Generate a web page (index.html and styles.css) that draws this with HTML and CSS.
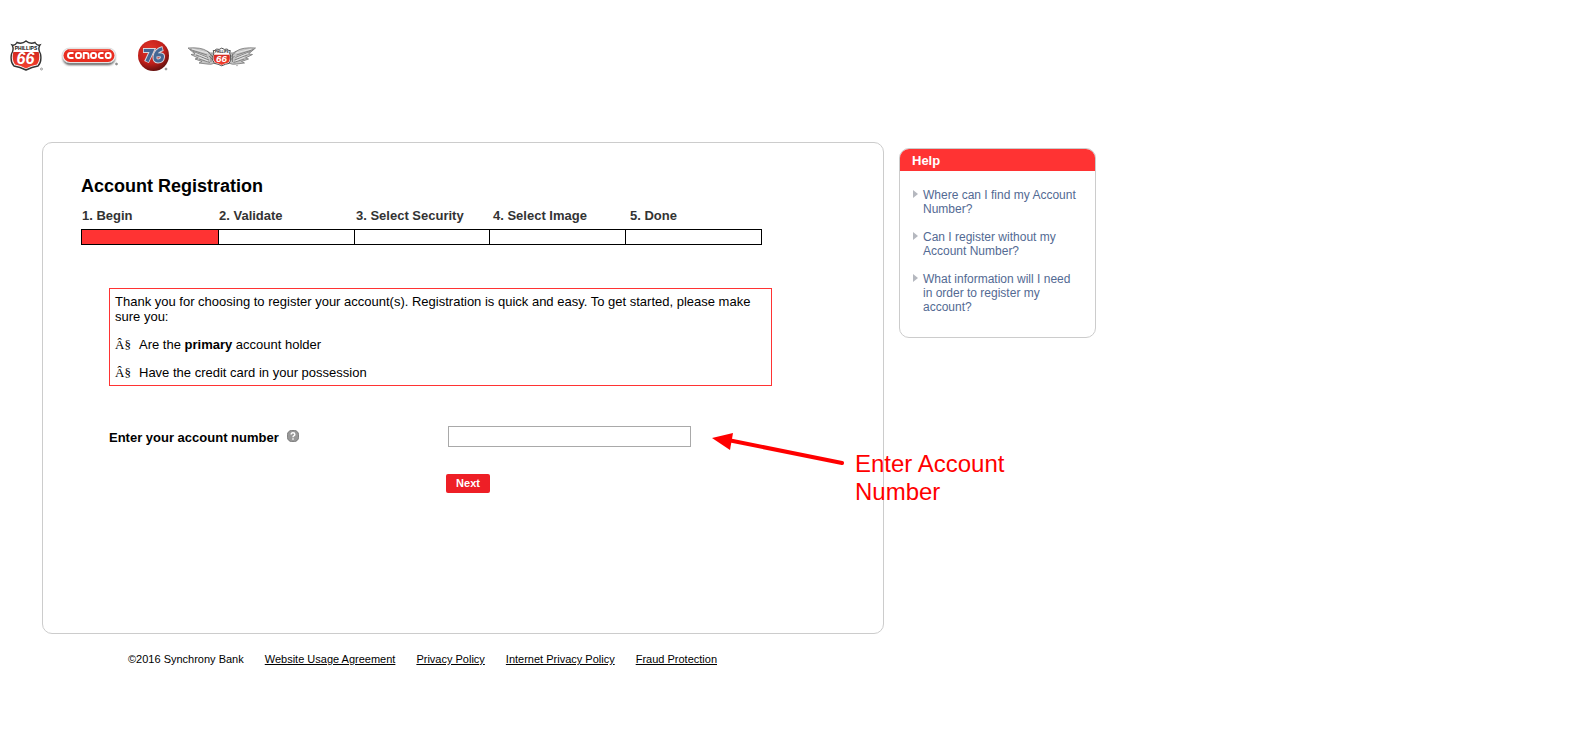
FILE: index.html
```html
<!DOCTYPE html>
<html lang="en">
<head>
<meta charset="utf-8">
<title>Account Registration</title>
<link rel="stylesheet" href="styles.css">
</head>
<body>
<header class="brands">
  <svg class="brand-shield" width="34" height="34" viewBox="0 0 34 34" role="img" aria-label="Phillips 66">
    <defs>
      <linearGradient id="red" x1="0" y1="0" x2="0" y2="1"><stop offset="0" stop-color="#d42a20"/><stop offset="1" stop-color="#f4402f"/></linearGradient>
      <g id="shield">
        <path d="M2 5 Q5 6 7 2.500 Q12 4.500 16 1 Q20 4.500 25 2.500 Q27 6 30 5 Q27.500 9 30.500 14 Q32 22 28 26 Q22 27 16 30 Q10 27 4 26 Q0 22 1.500 14 Q4.500 9 2 5Z" fill="#fff" stroke="#333" stroke-width="1.400"/>
        <path d="M3.300 12 L28.700 12 Q30.500 20 27 24.500 Q21 25.500 16 28.500 Q11 25.500 5 24.500 Q1.500 20 3.300 12Z" fill="url(#red)"/>
        <text x="16" y="9.500" class="shield-name">PHILLIPS</text>
        <text x="15.500" y="23.500" class="shield-number">66</text>
      </g>
    </defs>
    <use href="#shield"/>
    <circle cx="31.500" cy="29" r="1" fill="none" stroke="#777" stroke-width=".7"/>
  </svg>
  <svg class="brand-conoco" width="60" height="30" viewBox="0 0 60 30" role="img" aria-label="Conoco">
    <defs><filter id="soft" x="-20%" y="-30%" width="140%" height="170%"><feGaussianBlur stdDeviation="1"/></filter></defs>
    <rect x="3" y="8" width="52" height="13" rx="6.500" fill="#555" filter="url(#soft)"/>
    <rect x="2" y="4" width="54" height="15" rx="7.500" fill="#eee" stroke="#ccc" stroke-width=".6"/>
    <rect x="3.500" y="5" width="51" height="13" rx="6.500" fill="#e92d20"/>
    <path d="M9 6H49" stroke="#f98273" stroke-width="1"/>
    <g fill="none" stroke="#fff" stroke-width="1.900" stroke-linejoin="round">
      <path d="M13.500 9H10.500Q8 9 8 11.500T10.500 14H13.500"/>
      <rect x="16" y="9" width="5" height="5" rx="2"/>
      <path d="M23.700 15V9H26.500Q28.500 9 28.500 11V15"/>
      <rect x="31" y="9" width="5" height="5" rx="2"/>
      <path d="M43.500 9H41Q38.700 9 38.700 11.500T41 14H43.500"/>
      <rect x="45.700" y="9" width="5" height="5" rx="2"/>
    </g>
    <circle cx="56.500" cy="20" r="1" fill="#999" stroke="#777" stroke-width=".6"/>
  </svg>
  <svg class="brand-76" width="34" height="34" viewBox="0 0 34 34" role="img" aria-label="76">
    <defs><radialGradient id="ball" cx=".4" cy=".3" r=".7"><stop offset="0" stop-color="#e23427"/><stop offset=".65" stop-color="#bf1f1b"/><stop offset="1" stop-color="#67100e"/></radialGradient></defs>
    <circle cx="15.500" cy="15.500" r="15.500" fill="url(#ball)"/>
    <g fill="none" stroke-linejoin="miter">
      <path d="M5 10.500H14L8.500 22" stroke="#d9d6dc" stroke-width="5.200"/>
      <path d="M25 8.500Q18 10.500 17 16.500Q16.500 21 20 21Q24 21 24.500 17Q25 14 18 15" stroke="#d9d6dc" stroke-width="5"/>
      <path d="M5.800 10.500H14L9 21.500" stroke="#456794" stroke-width="3.200"/>
      <path d="M24.300 8.800Q18 10.500 17 16.500Q16.500 21 20 21Q24 21 24.500 17Q25 14 18 15" stroke="#456794" stroke-width="3"/>
    </g>
    <circle cx="28" cy="29" r="1" fill="#aaa" stroke="#777" stroke-width=".6"/>
  </svg>
  <svg class="brand-wings" width="72" height="22" viewBox="0 0 72 22" role="img" aria-label="Phillips 66 Aviation">
    <defs>
      <g id="wing">
        <path d="M1 2Q14 1 20 5Q23 8 28 7V17Q24 19 20 18L12 17L15 15.500L8 13L11 12L4 8.500L8 8Z" fill="#c4c4c4" stroke="#777" stroke-width=".8"/>
        <path d="M3 3.500L20 9M6 5.500L21 11.500M9 9L22 14M12 13L23 16.500M20 5L26 11M24 8V16M22 10L27 15" stroke="#666" stroke-width=".7" fill="none"/>
        <path d="M5 3L21 7M8 7L20 12M12 11L21 15" stroke="#f3f3f3" stroke-width=".7"/>
      </g>
    </defs>
    <use href="#wing"/>
    <use href="#wing" transform="translate(69.500 0) scale(-1 1)"/>
    <use href="#shield" transform="translate(25 1.500) scale(.61)"/>
    <circle cx="50" cy="19.500" r=".8" fill="#aaa"/>
  </svg>
</header>

<div class="layout">
  <div class="column">
    <main class="panel">
      <h1 class="title">Account Registration</h1>
      <ol class="steps">
        <li>1. Begin</li>
        <li>2. Validate</li>
        <li>3. Select Security</li>
        <li>4. Select Image</li>
        <li>5. Done</li>
      </ol>
      <div class="progress">
        <span class="segment segment-active"></span>
        <span class="segment"></span>
        <span class="segment"></span>
        <span class="segment"></span>
        <span class="segment"></span>
      </div>
      <section class="intro">
        <p>Thank you for choosing to register your account(s). Registration is quick and easy. To get started, please make sure you:</p>
        <p class="point"><span class="mark">Â§</span><span>Are the <b>primary</b> account holder</span></p>
        <p class="point"><span class="mark">Â§</span><span>Have the credit card in your possession</span></p>
      </section>
      <form class="form">
        <div class="label-cell">
          <label for="account">Enter your account number</label>
          <button type="button" class="tip" aria-label="Account number help">
            <svg width="12" height="12" viewBox="0 0 13 13">
              <rect x=".5" y=".5" width="12" height="12" rx="4.500" fill="#999" stroke="#777"/>
              <path d="M4.500 5Q4.500 3 6.500 3T8.500 4.800Q8.500 5.800 7.300 6.400Q6.500 6.800 6.500 7.800M6.500 9V10.500" fill="none" stroke="#fff" stroke-width="1.500"/>
            </svg>
          </button>
        </div>
        <input class="field" id="account" type="text">
        <button class="next" type="submit">Next</button>
      </form>
      <aside class="note">
        <svg class="note-arrow" width="134" height="34" viewBox="0 0 134 34" aria-hidden="true">
          <path d="M16 7L130 30" stroke="#f00" stroke-width="4" stroke-linecap="round"/>
          <path d="M0 5L21 0L18 17Z" fill="#f00"/>
        </svg>
        <p class="note-text">Enter Account Number</p>
      </aside>
    </main>
    <footer class="footer">
      <span>©2016 Synchrony Bank</span>
      <a href="#">Website Usage Agreement</a>
      <a href="#">Privacy Policy</a>
      <a href="#">Internet Privacy Policy</a>
      <a href="#">Fraud Protection</a>
    </footer>
  </div>
  <aside class="help">
    <h2 class="help-title">Help</h2>
    <ul class="help-list">
      <li><a href="#">Where can I find my Account Number?</a></li>
      <li><a href="#">Can I register without my Account Number?</a></li>
      <li><a href="#">What information will I need in order to register my account?</a></li>
    </ul>
  </aside>
</div>
</body>
</html>
```
FILE: styles.css
```css
* {
  box-sizing: border-box;
}

body {
  margin: 0;
  background: #fff;
  color: #000;
  font: 13px/15px "Liberation Sans", Arial, sans-serif;
}

h1, h2, p, ol, ul {
  margin: 0;
  padding: 0;
}

ol, ul {
  list-style: none;
}

.brands {
  display: flex;
  align-items: flex-start;
  padding: 40px 10px 0;
  height: 142px;
}

.brand-conoco {
  margin: 4px 16px 0;
}

.brand-76 {
  margin: 0 15px 0 2px;
}

.brand-wings {
  margin-top: 6px;
}

.shield-name {
  font: bold 5px "Liberation Sans", Arial, sans-serif;
  text-anchor: middle;
  fill: #111;
}

.shield-number {
  font: italic bold 16px "Liberation Sans", Arial, sans-serif;
  text-anchor: middle;
  fill: #fff;
}

.layout {
  display: flex;
  align-items: flex-start;
  gap: 15px;
  padding: 0 42px;
}

.column {
  flex: 0 1 842px;
}

.panel {
  position: relative;
  min-height: 492px;
  padding: 32px 38px;
  border: 1px solid #ccc;
  border-radius: 10px;
}

.title {
  font-size: 18px;
  line-height: 22px;
}

.steps {
  display: grid;
  grid-template-columns: repeat(5, 1fr);
  max-width: 686px;
  margin-top: 11px;
  padding-left: 1px;
  color: #333;
  font-weight: bold;
}

.progress {
  display: grid;
  grid-template-columns: repeat(5, 1fr);
  max-width: 681px;
  height: 16px;
  margin-top: 6px;
  border: 1px solid #000;
}

.segment + .segment {
  border-left: 1px solid #000;
}

.segment-active {
  background: #f33;
}

.intro {
  display: grid;
  gap: 13px;
  max-width: 663px;
  margin: 43px 0 0 28px;
  padding: 5px;
  border: 1px solid #f33;
}

.point {
  display: flex;
  gap: 8px;
}

.mark {
  width: 16px;
  font: 13px/15px "Liberation Serif", "Times New Roman", serif;
}

.form {
  display: grid;
  grid-template-columns: 339px 243px;
  align-items: center;
  row-gap: 27px;
  margin: 40px 0 0 28px;
}

.label-cell {
  display: flex;
  gap: 8px;
  padding-top: 1px;
  font-weight: bold;
}

.tip {
  display: flex;
  padding: 0;
  border: 0;
  background: none;
}

.field {
  height: 21px;
  padding: 1px 4px;
  border: 1px solid #a9a9a9;
  font: inherit;
}

.next {
  grid-column: 2;
  justify-self: start;
  width: 44px;
  height: 19px;
  margin-left: -2px;
  padding: 0;
  border: 0;
  border-radius: 2px;
  background: #ee1f26;
  color: #fff;
  font: bold 11px/19px "Liberation Sans", Arial, sans-serif;
}

.note {
  position: absolute;
  top: 290px;
  left: 669px;
  display: flex;
  width: 310px;
  gap: 9px;
  color: #f00;
}

.note-arrow {
  flex: none;
}

.note-text {
  padding-top: 17px;
  font-size: 24px;
  line-height: 28px;
}

.footer {
  display: flex;
  flex-wrap: wrap;
  gap: 21px;
  padding: 18px 86px;
  font-size: 11px;
}

.footer a {
  color: #000;
}

.help {
  flex: 0 0 197px;
  margin-top: 6px;
  overflow: hidden;
  border: 1px solid #ccc;
  border-radius: 10px;
}

.help-title {
  padding: 4px 12px 2px;
  background: #f33;
  color: #fff;
  font-size: 13px;
  line-height: 16px;
}

.help-list {
  display: grid;
  gap: 14px;
  padding: 17px 16px 23px 13px;
  font-size: 12px;
  line-height: 14px;
}

.help-list li {
  display: flex;
  gap: 5px;
}

.help-list li::before {
  content: "";
  flex: none;
  height: 0;
  margin-top: 2px;
  border: 4px solid transparent;
  border-right: 0;
  border-left: 5px solid #b5b8bf;
}

.help-list a {
  color: #536a93;
  text-decoration: none;
}
```
